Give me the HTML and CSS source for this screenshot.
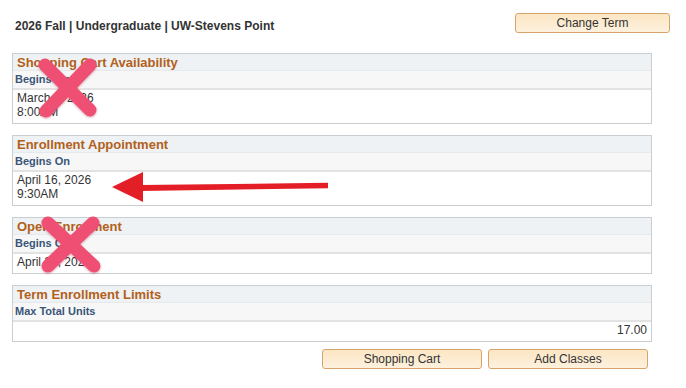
FILE: index.html
```html
<!DOCTYPE html>
<html lang="en">
  <head>
    <meta charset="UTF-8" />
    <meta name="viewport" content="width=device-width, initial-scale=1.0" />
    <title>Enrollment Dates</title>
    <link rel="stylesheet" href="styles.css">
  </head>
  <body>
    <div class="page">
      <div class="top-row">
        <div class="term-title">2026 Fall | Undergraduate | UW-Stevens Point</div>
        <button class="ps-btn">Change Term</button>
      </div>

      <div class="panel">
        <div class="panel-head">Shopping Cart Availability</div>
        <div class="panel-sub">Begins On</div>
        <div class="panel-body">March 2, 2026<br />8:00AM</div>
      </div>

      <div class="panel">
        <div class="panel-head">Enrollment Appointment</div>
        <div class="panel-sub">Begins On</div>
        <div class="panel-body">April 16, 2026<br />9:30AM</div>
      </div>

      <div class="panel">
        <div class="panel-head">Open Enrollment</div>
        <div class="panel-sub">Begins On</div>
        <div class="panel-body">April 27, 2026</div>
      </div>

      <div class="panel">
        <div class="panel-head">Term Enrollment Limits</div>
        <div class="panel-sub">Max Total Units</div>
        <div class="panel-body num">17.00</div>
      </div>

      <div class="bottom-row">
        <button class="ps-btn wide">Shopping Cart</button>
        <button class="ps-btn wide">Add Classes</button>
      </div>

      <!-- annotations drawn on top of the screenshot -->
      <svg class="marks" width="686" height="388" viewBox="0 0 686 388">
        <defs>
          <filter id="soft" x="-20%" y="-20%" width="140%" height="140%">
            <feDropShadow dx="0" dy="1" stdDeviation="1" flood-color="#8a0a2a" flood-opacity="0.35" />
          </filter>
        </defs>
        <g class="cross" filter="url(#soft)">
          <line x1="45" y1="65" x2="90" y2="110" />
          <line x1="90" y1="65" x2="46" y2="111" />
        </g>
        <g class="cross" filter="url(#soft)">
          <line x1="48" y1="223" x2="94" y2="266" />
          <line x1="93" y1="223" x2="48" y2="266" />
        </g>
        <g class="arrow">
          <polygon points="112,187 143,172 143,202" />
          <polygon points="140,185 328,182.8 328,188.2 140,191" />
        </g>
      </svg>
    </div>
  </body>
</html>
```

FILE: styles.css
```css
* {
  box-sizing: border-box;
  margin: 0;
  padding: 0;
}

body {
  background: #fff;
  font-family: "Liberation Sans", Arial, sans-serif;
  color: #333;
}

.page {
  position: relative;
  width: 686px;
  height: 388px;
  padding: 13px 16px 0 12px;
}

.top-row {
  display: flex;
  justify-content: space-between;
  align-items: flex-start;
  margin-bottom: 20px;
}

.term-title {
  margin: 6px 0 0 3px;
  font-size: 12px;
  font-weight: bold;
  line-height: 14px;
  color: #333;
}

.ps-btn {
  width: 155px;
  height: 20px;
  border: 1px solid #d9a46c;
  border-radius: 3px;
  background: linear-gradient(#fce6c4, #fdf1de);
  font-family: "Liberation Sans", Arial, sans-serif;
  font-size: 12px;
  color: #333;
  line-height: 17px;
}

.ps-btn.wide {
  width: 160px;
}

.panel {
  width: 640px;
  border: 1px solid #c9ced3;
  margin-bottom: 11px;
}

.panel-head {
  height: 17px;
  padding-left: 4px;
  background: #eef2f4;
  color: #b2601a;
  font-size: 13px;
  font-weight: bold;
  line-height: 17px;
  border-bottom: 1px solid #e6eaed;
}

.panel-sub {
  height: 17px;
  padding-left: 2px;
  background: #f7f7f7;
  color: #3a5578;
  font-size: 11px;
  font-weight: bold;
  line-height: 16px;
}

.panel-body {
  border-top: 2px solid #e2e2e2;
  padding: 1px 4px 4px 4px;
  font-size: 12px;
  line-height: 14px;
  color: #333;
}

.panel-body.num {
  text-align: right;
}

.bottom-row {
  width: 640px;
  display: flex;
  justify-content: flex-end;
  gap: 6px;
  padding-right: 4px;
  margin-top: -4px;
}

.marks {
  position: absolute;
  top: 0;
  left: 0;
  pointer-events: none;
}

.cross line {
  stroke: #ef5073;
  stroke-width: 13;
  stroke-linecap: round;
}

.arrow polygon {
  fill: #e41e26;
}
```
